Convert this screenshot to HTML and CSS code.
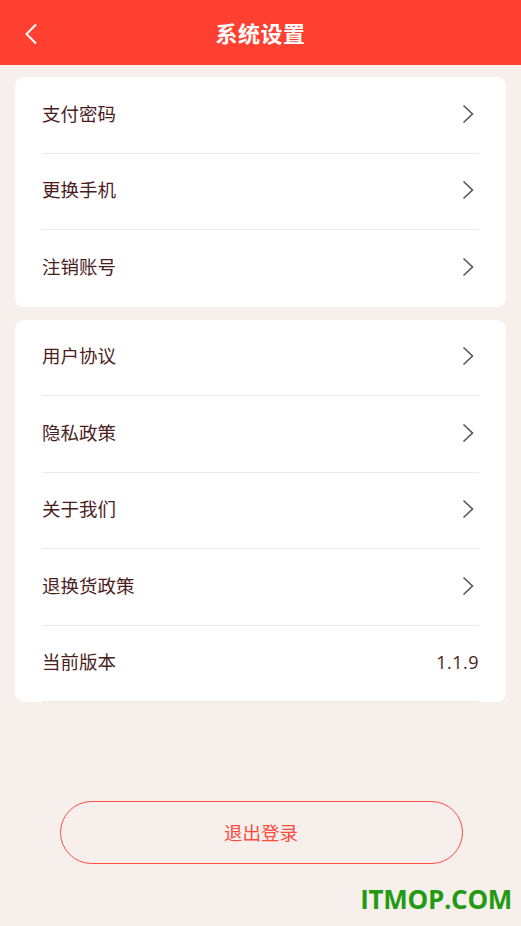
FILE: index.html
```html
<!DOCTYPE html>
<html lang="zh">
<head>
<meta charset="utf-8">
<link rel="stylesheet" href="styles.css">
</head>
<body>
<div class="page">
  <header class="topbar">
    <span class="back">
      <svg width="14" height="22" viewBox="0 0 14 22"><path d="M12 1.5 L2.5 11 L12 20.5" fill="none" stroke="#fff" stroke-width="2"/></svg>
    </span>
    <h1 class="title">系统设置</h1>
  </header>

  <section class="card">
    <div class="row"><span class="label">支付密码</span><span class="arrow"><svg width="12" height="20" viewBox="0 0 12 20"><path d="M1.5 1.5 L10.5 10 L1.5 18.5" fill="none" stroke="#555" stroke-width="1.6"/></svg></span></div>
    <div class="row"><span class="label">更换手机</span><span class="arrow"><svg width="12" height="20" viewBox="0 0 12 20"><path d="M1.5 1.5 L10.5 10 L1.5 18.5" fill="none" stroke="#555" stroke-width="1.6"/></svg></span></div>
    <div class="row last"><span class="label">注销账号</span><span class="arrow"><svg width="12" height="20" viewBox="0 0 12 20"><path d="M1.5 1.5 L10.5 10 L1.5 18.5" fill="none" stroke="#555" stroke-width="1.6"/></svg></span></div>
  </section>

  <section class="card">
    <div class="row"><span class="label">用户协议</span><span class="arrow"><svg width="12" height="20" viewBox="0 0 12 20"><path d="M1.5 1.5 L10.5 10 L1.5 18.5" fill="none" stroke="#555" stroke-width="1.6"/></svg></span></div>
    <div class="row"><span class="label">隐私政策</span><span class="arrow"><svg width="12" height="20" viewBox="0 0 12 20"><path d="M1.5 1.5 L10.5 10 L1.5 18.5" fill="none" stroke="#555" stroke-width="1.6"/></svg></span></div>
    <div class="row"><span class="label">关于我们</span><span class="arrow"><svg width="12" height="20" viewBox="0 0 12 20"><path d="M1.5 1.5 L10.5 10 L1.5 18.5" fill="none" stroke="#555" stroke-width="1.6"/></svg></span></div>
    <div class="row"><span class="label">退换货政策</span><span class="arrow"><svg width="12" height="20" viewBox="0 0 12 20"><path d="M1.5 1.5 L10.5 10 L1.5 18.5" fill="none" stroke="#555" stroke-width="1.6"/></svg></span></div>
    <div class="row"><span class="label">当前版本</span><span class="value">1.1.9</span></div>
  </section>

  <div class="actions">
    <button class="logout">退出登录</button>
  </div>

  <div class="watermark">ITMOP.COM</div>
</div>
</body>
</html>
```

FILE: styles.css
```css
* { box-sizing: border-box; }
html, body { margin: 0; padding: 0; }
body {
  background: #f7efec;
  font-family: "Noto Sans CJK SC", "Noto Sans", sans-serif;
  width: 521px;
  height: 926px;
  overflow: hidden;
}
.page {
  display: flex;
  flex-direction: column;
  height: 926px;
}
.topbar {
  height: 65px;
  background: #ff3f30;
  display: flex;
  align-items: center;
  justify-content: center;
  position: relative;
  flex: none;
}
.back {
  position: absolute;
  left: 24px;
  top: 23px;
  display: flex;
}
.title {
  margin: 0 0 2px 0;
  color: #fff;
  font-size: 22px;
  font-weight: 700;
  letter-spacing: 0.5px;
  line-height: 1;
}
.card {
  margin: 12px 15px 0;
  background: #fff;
  border-radius: 9px;
  padding: 0 27px;
  display: flex;
  flex-direction: column;
}
.card + .card { margin-top: 13px; }
.row {
  height: 76.5px;
  display: flex;
  align-items: center;
  justify-content: space-between;
  border-bottom: 1px solid #eeeaea;
  padding-bottom: 2px;
}
.row.last { border-bottom: none; }
.label {
  font-size: 18.5px;
  line-height: 1;
  color: #4b1e1e;
  padding-bottom: 2px;
}
.arrow {
  display: flex;
  margin-right: 5px;
}
.value {
  font-size: 18px;
  color: #4b1e1e;
  font-family: "Open Sans", "Noto Sans", sans-serif;
  letter-spacing: 0.5px;
  line-height: 1;
}
.actions {
  display: flex;
  justify-content: center;
  margin-top: 99px;
}
.logout {
  width: 403px;
  height: 63px;
  border: 1.8px solid #ff4d42;
  border-radius: 32px;
  background: transparent;
  color: #ff4a3d;
  font-family: "Noto Sans CJK SC", sans-serif;
  font-size: 18.5px;
  margin-left: 1px;
  padding-bottom: 3px;
}
.watermark {
  margin-top: 20px;
  align-self: flex-end;
  margin-right: 9px;
  font-family: "Open Sans", "Noto Sans", sans-serif;
  font-weight: 700;
  font-size: 26px;
  color: #239a12;
  letter-spacing: -0.3px;
  line-height: 30px;
}
```
